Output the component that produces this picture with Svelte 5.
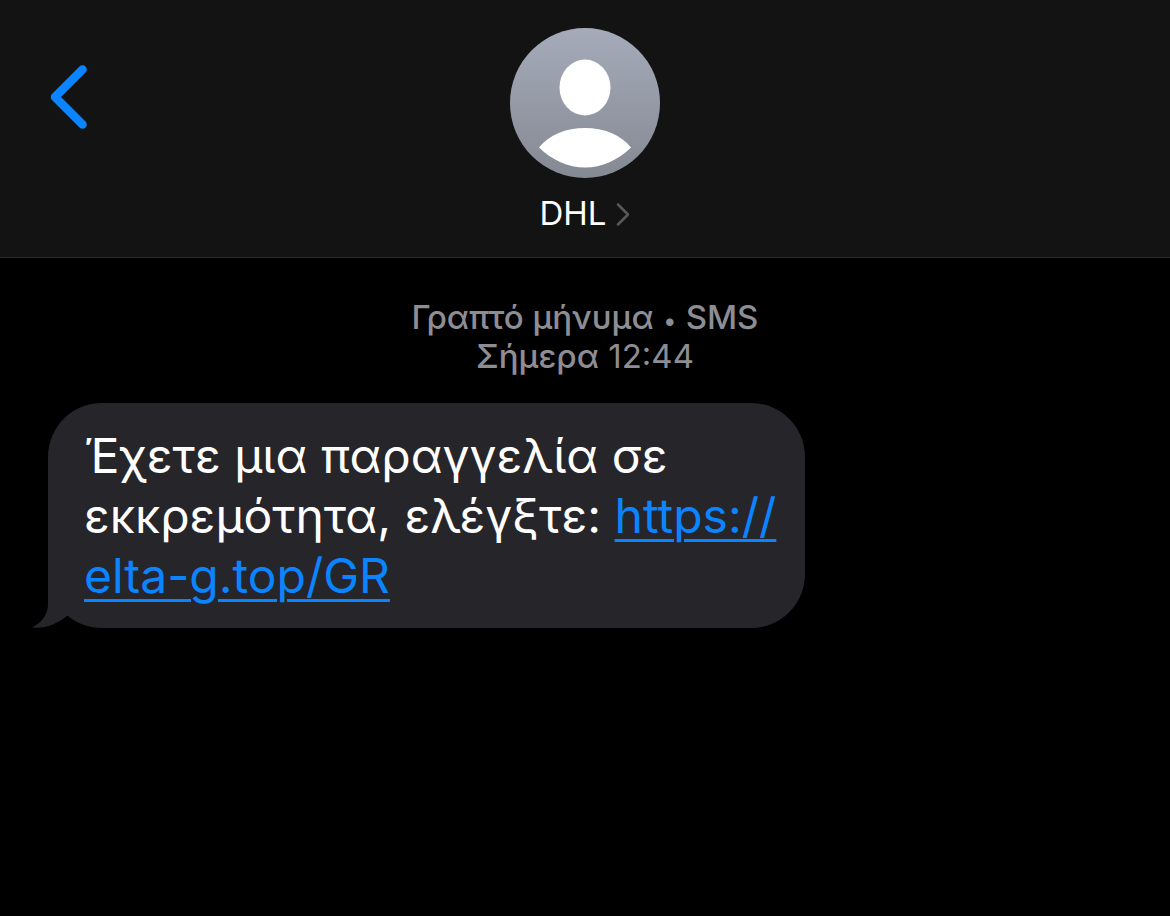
<script>
  const sender = 'DHL';
</script>

<div class="screen">
  <header>
    <button class="back" aria-label="Πίσω">
      <svg width="40" height="66" viewBox="0 0 40 66"><path d="M34.500 5.500 7 33 34.500 60.500" fill="none" stroke="#0a84ff" stroke-width="8.500" stroke-linecap="round" stroke-linejoin="round" /></svg>
    </button>
    <button class="contact">
      <svg class="avatar" width="150" height="150" viewBox="0 0 150 150" aria-hidden="true">
        <defs>
          <linearGradient id="shade" x1="0" y1="0" x2="0" y2="1"><stop offset="0" stop-color="#a5abb9" /><stop offset="1" stop-color="#858993" /></linearGradient>
        </defs>
        <circle cx="75" cy="75" r="75" fill="url(#shade)" />
        <ellipse cx="75" cy="59.500" rx="25.500" ry="28" fill="#fff" />
        <path d="M29 119.500C39 107 56 100 75 100S111 107 121 119.500C108 132 92 139.500 75 139.500S42 132 29 119.500Z" fill="#fff" />
      </svg>
      <span class="name">{sender}
        <svg width="16" height="26" viewBox="0 0 16 26" aria-hidden="true"><path d="M3 3.500 13 13.500 3 23.500" fill="none" stroke="#58585b" stroke-width="2.500" stroke-linecap="round" stroke-linejoin="round" /></svg>
      </span>
    </button>
  </header>
  <main>
    <div class="stamp"><strong>Γραπτό μήνυμα</strong> <span class="dot">•</span> <span class="kind">SMS</span><br /><strong>Σήμερα</strong> 12:44</div>
    <div class="bubble">
      <svg class="tail" width="54" height="60" viewBox="0 0 54 60" aria-hidden="true"><path d="M16 0V36C16 46 10 55 0 59.500 13 61 25 56 35 48L54 30V0Z" fill="#26252a" /></svg>
      <p>Έχετε μια παραγγελία σε<br />εκκρεμότητα, ελέγξτε: <a href="https://elta-g.top/GR">https://<br />elta-g.top/GR</a></p>
    </div>
  </main>
</div>

<style>
  :global(body) { margin: 0; background: #000; }
  .screen { min-height: 100vh; background: #000; color: #fff; font-family: Inter, sans-serif; }
  header { display: grid; grid-template-columns: 1fr auto 1fr; align-items: start; padding: 28px 48px 24px; background: #131313; border-bottom: 1px solid #2b2b2d; }
  button { border: 0; padding: 0; background: none; color: inherit; font: inherit; cursor: pointer; }
  svg { display: block; }
  .back { justify-self: start; margin-top: 36px; }
  .contact { display: flex; flex-direction: column; align-items: center; gap: 16px; }
  .name { display: flex; align-items: center; gap: 8px; font-size: 33px; line-height: 39px; }
  .stamp { padding-top: 40px; text-align: center; font-size: 33px; line-height: 39px; color: #8d8d93; }
  .stamp strong, .kind { font-weight: 500; }
  .dot { font-size: 24px; line-height: 24px; }
  .bubble { position: relative; width: fit-content; margin: 27px 48px 0; padding: 23px 29px 22px 36px; border-radius: 54px; background: #26252a; }
  .tail { position: absolute; left: -16px; bottom: 0; }
  p { position: relative; margin: 0; font-size: 48px; line-height: 60px; }
  a { color: #0a84ff; text-decoration-thickness: 3px; text-underline-offset: 6px; }
</style>
